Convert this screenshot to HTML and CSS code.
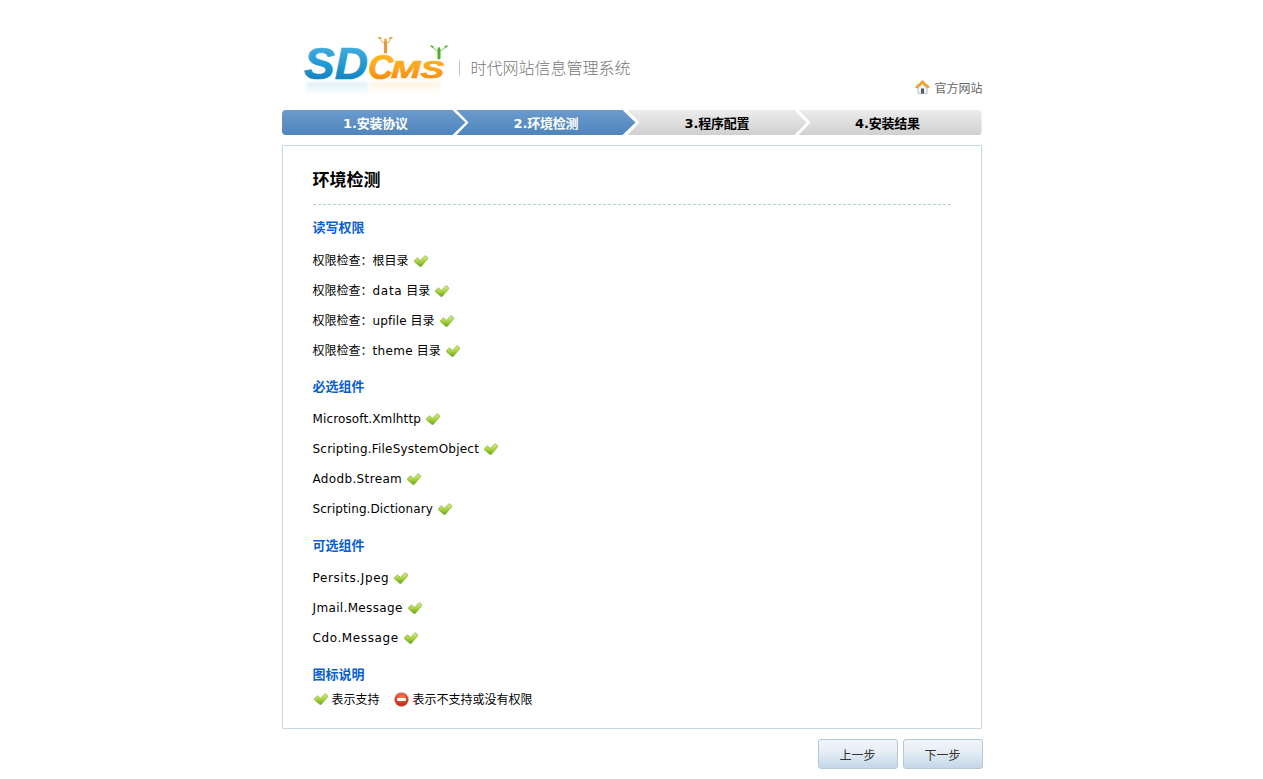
FILE: index.html
```html
<!DOCTYPE html>
<html lang="zh-CN">
<head>
<meta charset="utf-8">
<title>SDCMS 安装向导</title>
<link rel="stylesheet" href="styles.css">
</head>
<body>
<svg class="defs" width="0" height="0" aria-hidden="true">
  <defs>
    <linearGradient id="tickfill" x1="0" y1="0" x2="0" y2="1">
      <stop offset="0" stop-color="#dcef86"/>
      <stop offset=".55" stop-color="#a6d13c"/>
      <stop offset="1" stop-color="#62a51a"/>
    </linearGradient>
    <radialGradient id="redfill" cx=".5" cy=".3" r=".75">
      <stop offset="0" stop-color="#f4805c"/>
      <stop offset=".6" stop-color="#dc3a1e"/>
      <stop offset="1" stop-color="#b81c0c"/>
    </radialGradient>
    <symbol id="tick" viewBox="0 0 14 14">
      <path d="M.6 6.400 3.400 3.800 6.500 6.400 11 1.600 13.500 3.400 13.500 5 7.200 12.600 6 12.600 .6 8Z" fill="url(#tickfill)" stroke="#8ab043" stroke-width=".7" stroke-linejoin="round"/>
    </symbol>
  </defs>
</svg>
<div class="page">
  <header class="top">
    <svg class="logo" width="160" height="70" viewBox="0 0 160 70" role="img" aria-label="SDCMS">
      <defs>
        <linearGradient id="blue" x1="0" y1="0" x2="0" y2="1">
          <stop offset="0" stop-color="#4fb6e4"/>
          <stop offset=".6" stop-color="#1c94cf"/>
          <stop offset="1" stop-color="#0d74ae"/>
        </linearGradient>
        <linearGradient id="orange" x1="0" y1="0" x2="0" y2="1">
          <stop offset="0" stop-color="#ffd02e"/>
          <stop offset=".55" stop-color="#fca81c"/>
          <stop offset="1" stop-color="#f37a0a"/>
        </linearGradient>
        <linearGradient id="fadeblue" x1="0" y1="0" x2="0" y2="1">
          <stop offset="0" stop-color="#a9d8ee" stop-opacity=".38"/>
          <stop offset="1" stop-color="#a9d8ee" stop-opacity="0"/>
        </linearGradient>
        <linearGradient id="fadeorange" x1="0" y1="0" x2="0" y2="1">
          <stop offset="0" stop-color="#ffdca8" stop-opacity=".38"/>
          <stop offset="1" stop-color="#ffdca8" stop-opacity="0"/>
        </linearGradient>
        <filter id="soft"><feGaussianBlur stdDeviation="1.500"/></filter>
      </defs>
      <rect x="11" y="52" width="62" height="14" fill="url(#fadeblue)" filter="url(#soft)"/>
      <rect x="76" y="52" width="70" height="12" fill="url(#fadeorange)" filter="url(#soft)"/>
      <text class="logo-word"><tspan class="logo-sd" x="9" y="49" textLength="64" lengthAdjust="spacingAndGlyphs">SD</tspan><tspan class="logo-c" x="73" y="49">C</tspan><tspan class="logo-ms" x="96" y="48" textLength="53" lengthAdjust="spacingAndGlyphs">MS</tspan></text>
      <g fill="none" stroke-linecap="round">
        <path d="M85 8 87 12.500H94L96 8" stroke="#e9b76a" stroke-width="1"/>
        <path d="M83.500 7.500 86 8.500M94.500 8.500 97 7.500" stroke="#d9a040" stroke-width="1.400"/>
        <path d="M90.500 12V22" stroke="#e59a3c" stroke-width="3.200"/>
        <circle cx="90.500" cy="10" r="1.400" fill="#eaa848" stroke="none"/>
        <path d="M137 17 141.500 20.500H146.500L151 17" stroke="#74c850" stroke-width="1"/>
        <path d="M136 16 138 17M150 17 152 16" stroke="#58b030" stroke-width="1.400"/>
        <path d="M144 20V28" stroke="#4fae2c" stroke-width="3"/>
        <circle cx="144" cy="18.500" r="1.300" fill="#4fae2c" stroke="none"/>
      </g>
    </svg>
    <span class="divider"></span>
    <span class="slogan">时代网站信息管理系统</span>
    <a class="site-link" href="#">
      <svg class="home" width="15" height="14" viewBox="0 0 15 14" aria-hidden="true">
        <path d="M.5 7 7.500 .6 14.500 7 13 8.200 7.500 3.400 2 8.200Z" fill="#f7a81f" stroke="#d88c10" stroke-width=".6"/>
        <path d="M3 8 7.500 4.200 12 8v5.500H3Z" fill="#f0f2f4" stroke="#9aa0a6" stroke-width=".6"/>
        <rect x="6" y="8.500" width="3" height="5" fill="#4e5a66"/>
      </svg>
      <span>官方网站</span>
    </a>
  </header>

  <nav class="steps">
    <div class="step step-1 done">1.安装协议</div>
    <div class="step step-2 done">2.环境检测</div>
    <div class="step step-3">3.程序配置</div>
    <div class="step step-4">4.安装结果</div>
  </nav>

  <main class="box">
    <h1 class="title">环境检测</h1>

    <section class="group">
      <h2>读写权限</h2>
      <p class="row row-cn"><span>权限检查：根目录</span><svg class="ico"><use href="#tick"/></svg></p>
      <p class="row row-cn"><span>权限检查：<span class="sp-d">data</span> 目录</span><svg class="ico"><use href="#tick"/></svg></p>
      <p class="row row-cn"><span>权限检查：<span class="sp-a">upfile</span> 目录</span><svg class="ico"><use href="#tick"/></svg></p>
      <p class="row row-cn"><span>权限检查：<span class="sp-b">theme</span> 目录</span><svg class="ico"><use href="#tick"/></svg></p>
    </section>

    <section class="group">
      <h2>必选组件</h2>
      <p class="row"><span class="sp-a">Microsoft.Xmlhttp</span><svg class="ico"><use href="#tick"/></svg></p>
      <p class="row"><span class="sp-e">Scripting.FileSystemObject</span><svg class="ico"><use href="#tick"/></svg></p>
      <p class="row"><span class="sp-b">Adodb.Stream</span><svg class="ico"><use href="#tick"/></svg></p>
      <p class="row"><span class="sp-f">Scripting.Dictionary</span><svg class="ico"><use href="#tick"/></svg></p>
    </section>

    <section class="group">
      <h2>可选组件</h2>
      <p class="row"><span class="sp-c">Persits.Jpeg</span><svg class="ico"><use href="#tick"/></svg></p>
      <p class="row"><span class="sp-b">Jmail.Message</span><svg class="ico"><use href="#tick"/></svg></p>
      <p class="row"><span class="sp-c">Cdo.Message</span><svg class="ico"><use href="#tick"/></svg></p>
    </section>

    <section class="group">
      <h2>图标说明</h2>
      <div class="legend">
        <svg class="ico ico-legend"><use href="#tick"/></svg><span class="legend-text">表示支持</span>
        <svg class="ico ico-no" viewBox="0 0 15 15"><circle cx="7.500" cy="7.500" r="7" fill="url(#redfill)" stroke="#c9b0a8" stroke-width=".5"/><rect x="3" y="6" width="9" height="3" rx=".8" fill="#fff"/></svg><span class="legend-text">表示不支持或没有权限</span>
      </div>
    </section>
  </main>

  <div class="actions">
    <button class="btn" type="button">上一步</button>
    <button class="btn" type="button">下一步</button>
  </div>
</div>
</body>
</html>
```
FILE: styles.css
```css
* { box-sizing: border-box; }
html, body { margin: 0; padding: 0; background: #fff; }
body {
  font: 12px/1.5 "DejaVu Sans", "Noto Sans CJK SC", sans-serif;
  color: #000;
}
.defs { position: absolute; }
.page { width: 700px; margin: 0 auto; }

/* header */
.top {
  height: 110px;
  display: flex;
  align-items: flex-start;
}
.logo { margin: 30px 0 0 13px; flex: none; }
.logo-word { font-family: "Liberation Sans", sans-serif; font-weight: 700; font-style: italic; stroke-width: .7; }
.logo-sd { font-size: 45px; fill: url(#blue); stroke: url(#blue); }
.logo-c { font-size: 35px; fill: url(#orange); stroke: url(#orange); }
.logo-ms { font-size: 23px; fill: url(#orange); stroke: url(#orange); }
.divider {
  width: 1px;
  height: 20px;
  margin: 58px 0 0 4px;
  background: linear-gradient(#fff, #bbb 30%, #bbb 70%, #fff);
  flex: none;
}
.slogan {
  margin: 55px 0 0 11px;
  font: 16px/24px "Noto Sans CJK SC", sans-serif;
  font-weight: 300;
  color: #777;
  white-space: nowrap;
}
.site-link {
  margin: 79px -1px 0 auto;
  display: flex;
  align-items: center;
  gap: 4px;
  height: 18px;
  color: #666;
  text-decoration: none;
  white-space: nowrap;
}
.home { margin-top: -3px; }
.site-link span { font-family: "Noto Sans CJK SC", sans-serif; }

/* step bar */
.steps { display: flex; height: 25px; }
.step {
  flex: none;
  line-height: 27px;
  font-weight: 700;
  font-size: 13px;
  letter-spacing: -.2px;
  text-align: center;
  color: #000;
  background: linear-gradient(#ececec, #d0d0d0);
}
.done {
  color: #fff;
  background: linear-gradient(#6b9bcd, #5084bb);
}
.step-1 {
  width: 184px;
  padding-left: 4px;
  border-radius: 4px 0 0 4px;
  clip-path: polygon(0 0, 171px 0, 100% 50%, 171px 100%, 0 100%);
}
.step-2 {
  width: 179px;
  margin-left: -9px;
  clip-path: polygon(0 0, 166px 0, 100% 50%, 166px 100%, 0 100%, 12px 50%);
}
.step-3 {
  width: 179px;
  margin-left: -8px;
  clip-path: polygon(0 0, 167px 0, 100% 50%, 167px 100%, 0 100%, 12px 50%);
}
.step-4 {
  width: 183px;
  margin-left: -8px;
  padding-right: 5px;
  border-radius: 0 4px 4px 0;
  clip-path: polygon(0 0, 100% 0, 100% 100%, 0 100%, 12px 50%);
}

/* content box */
.box {
  margin-top: 10px;
  height: 584px;
  padding: 19px 30px 0;
  border: 1px solid #c5d9e4;
}
.title {
  margin: 0 0 1px;
  height: 40px;
  font-size: 17px;
  line-height: 31px;
  font-weight: 700;
  border-bottom: 1px dashed #a9d3d8;
}
.group { margin-top: 10px; }
.group h2 {
  margin: 0 0 5px;
  height: 24px;
  font-size: 13px;
  line-height: 25px;
  font-weight: 700;
  color: #0a5fd0;
}
.row {
  margin: 0;
  height: 30px;
  padding-top: 2px;
  display: flex;
  align-items: center;
  white-space: pre;
}
.row-cn { padding-top: 4px; }
.row-cn .ico { margin-top: -1px; }
.sp-a { letter-spacing: .13px; }
.sp-b { letter-spacing: .35px; }
.sp-c { letter-spacing: .6px; }
.sp-d { letter-spacing: .7px; }
.sp-e { letter-spacing: .21px; }
.sp-f { letter-spacing: .08px; }
.ico { width: 14px; height: 14px; margin-left: 5px; flex: none; }

.legend {
  height: 24px;
  margin-top: -4px;
  display: flex;
  align-items: center;
  font-family: "Noto Sans CJK SC", sans-serif;
}
.ico-legend { margin-left: 1px; }
.ico-no { margin-left: 14px; width: 15px; height: 15px; }
.legend-text { margin-left: 4px; }

/* buttons */
.actions {
  margin: 10px -1px 0 0;
  display: flex;
  justify-content: flex-end;
  gap: 5px;
}
.btn {
  width: 80px;
  height: 30px;
  padding: 2px 0 0;
  border: 1px solid #b3c8da;
  border-radius: 3px;
  background: linear-gradient(#f2f6fa, #e6eef6 40%, #c4d6e8);
  font: 12px/26px "Noto Sans CJK SC", sans-serif;
  color: #333;
}
```
